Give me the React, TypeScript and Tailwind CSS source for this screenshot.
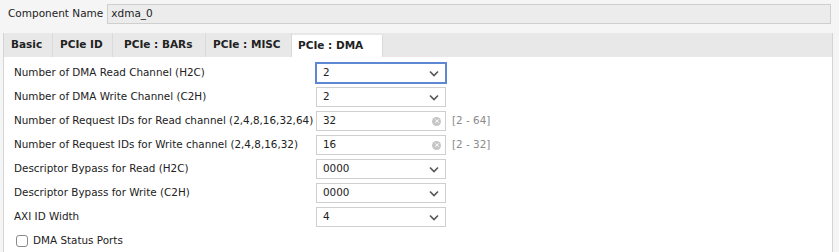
import { X } from 'lucide-react';

type Row = {
  label: string;
  value: string;
  kind: 'select' | 'text';
  range?: string;
  focused?: boolean;
};

const rows: Row[] = [
  { label: 'Number of DMA Read Channel (H2C)', value: '2', kind: 'select', focused: true },
  { label: 'Number of DMA Write Channel (C2H)', value: '2', kind: 'select' },
  { label: 'Number of Request IDs for Read channel (2,4,8,16,32,64)', value: '32', kind: 'text', range: '[2 - 64]' },
  { label: 'Number of Request IDs for Write channel (2,4,8,16,32)', value: '16', kind: 'text', range: '[2 - 32]' },
  { label: 'Descriptor Bypass for Read (H2C)', value: '0000', kind: 'select' },
  { label: 'Descriptor Bypass for Write (C2H)', value: '0000', kind: 'select' },
  { label: 'AXI ID Width', value: '4', kind: 'select' },
];

const tabs = [
  { name: 'Basic', w: 'w-[49px]', pl: 'pl-[7px]' },
  { name: 'PCIe ID', w: 'w-[60px]', pl: 'pl-[7px]' },
  { name: 'PCIe : BARs', w: 'w-[93px]', pl: 'pl-[11px]' },
  { name: 'PCIe : MISC', w: 'w-[86px]', pl: 'pl-[7px]' },
  { name: 'PCIe : DMA', w: 'w-[91px]', pl: 'pl-[6px]', active: true },
];

function Chevron() {
  return (
    <svg width="10" height="7" viewBox="0 0 10 7" className="shrink-0 mr-[2px]">
      <path d="M1 1.5 L5 5.5 L9 1.5" fill="none" stroke="#555" strokeWidth="1.6" />
    </svg>
  );
}

function Field({ row }: { row: Row }) {
  return (
    <div className="flex items-center">
      <div
        className={`flex items-center bg-white pr-[4px] ${
          row.focused
            ? '-ml-[1px] w-[132px] h-[22px] border-2 border-[#5f88d4] pl-[6px]'
            : 'w-[130px] h-[20px] border border-[#cfcfcf] pl-[6px]'
        }`}
      >
        <span className="flex-1 text-[#222]">{row.value}</span>
        {row.kind === 'select' ? (
          <Chevron />
        ) : (
          <span className="w-[9px] h-[9px] rounded-full bg-[#c6c6c6] flex items-center justify-center">
            <X size={6} strokeWidth={3.5} color="#fff" />
          </span>
        )}
      </div>
      {row.range && <span className="ml-[6px] text-[#8a8a8a]">{row.range}</span>}
    </div>
  );
}

export default function App() {
  return (
    <div
      className="w-[839px] h-[252px] overflow-hidden bg-[#f5f5f5] text-[10.5px] text-[#222]"
      style={{ fontFamily: '"DejaVu Sans", sans-serif' }}
    >
      {/* Component name */}
      <div className="flex items-center pt-[4px] pl-[8px] pr-[8px]">
        <span className="whitespace-nowrap">Component Name</span>
        <div className="ml-[4px] flex-1 h-[20px] bg-[#ececec] border border-[#cfcfcf] flex items-center pl-[3px]">
          xdma_0
        </div>
      </div>

      {/* Tabbed panel */}
      <div className="mt-[9px] ml-[3px] mr-[6px] border-l border-r border-[#d4d4d4] bg-white">
        <div className="flex h-[24px] bg-[#e8e8e8] items-end">
          {tabs.map((t) => (
            <div
              key={t.name}
              className={`${t.w} ${t.pl} flex items-center font-bold whitespace-nowrap border-r border-[#dadada] ${
                t.active ? 'bg-white h-[22px]' : 'h-full'
              }`}
            >
              {t.name}
            </div>
          ))}
        </div>

        <div className="pt-[4px] pl-[10px] text-[10.4px]">
          {rows.map((r) => (
            <div key={r.label} className="flex items-center h-[24px]">
              <span className="w-[302px] shrink-0 whitespace-nowrap">{r.label}</span>
              <Field row={r} />
            </div>
          ))}
          <div className="flex items-center h-[24px] pl-[2px]">
            <span className="w-[12px] h-[12px] rounded-[3px] border border-[#8a8a8a] bg-white" />
            <span className="ml-[5px]">DMA Status Ports</span>
          </div>
        </div>
      </div>
    </div>
  );
}
